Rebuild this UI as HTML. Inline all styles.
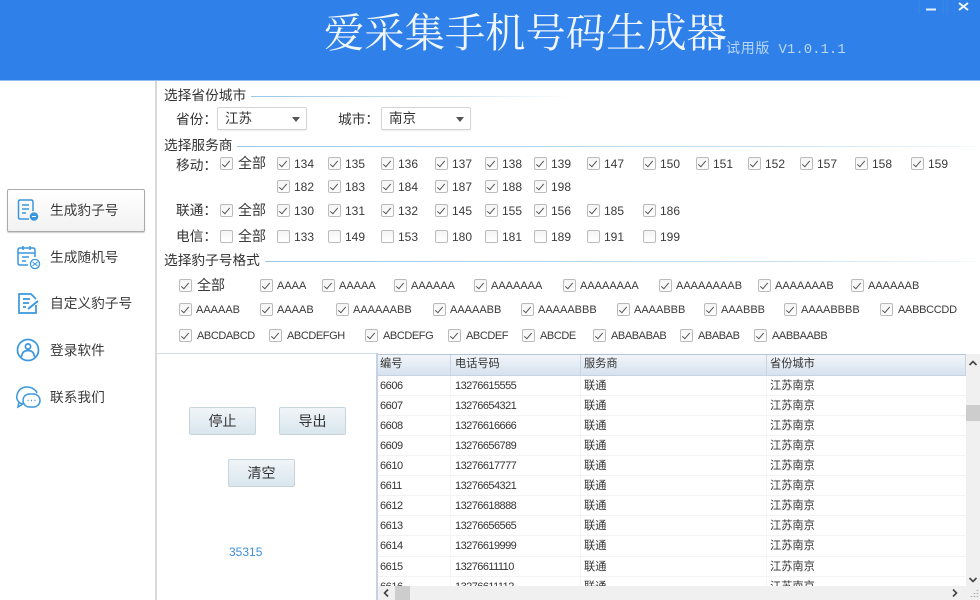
<!DOCTYPE html>
<html lang="zh"><head><meta charset="utf-8"><title>爱采集手机号码生成器</title>
<style>
html,body{margin:0;padding:0;background:#fff}
#a{position:relative;width:980px;height:600px;overflow:hidden;background:#fff;font-family:"Liberation Sans","Noto Sans CJK SC",sans-serif;color:#333;filter:blur(.35px)}
#a>*{position:absolute}
.hd{left:0;top:0;width:980px;height:80px;background:#2f80e8;border-bottom:1px solid #8fbdf0}
.ti{left:324px;top:9px;font:40.3px/50px "Liberation Serif","Noto Serif CJK SC",serif;color:#f0f6fe;white-space:nowrap}
.ver{left:726px;top:39px;font:14px/18px "Liberation Mono","Noto Sans CJK SC",monospace;color:#b9d6f7;white-space:pre}
.ve{font-family:"Noto Sans CJK SC",sans-serif;letter-spacing:.7px}
.s{font-size:13.7px;line-height:16px;white-space:nowrap;color:#333}
.s b{font-family:"Noto Sans CJK TC",sans-serif;font-weight:400}
.l{height:1px}
.k{height:14px;line-height:14px;padding-left:17px;font-size:12px;white-space:nowrap;color:#3a3a3a}
.k:before{content:"";position:absolute;left:0;top:0;width:11px;height:11px;border:1px solid #bbb;border-radius:2px;background:linear-gradient(#f4f4f4,#fff)}
.k:after{content:"";position:absolute;left:4px;top:2px;width:3px;height:7px;border:solid #555;border-width:0 1.4px 1.4px 0;transform:rotate(40deg)}
.u:after{display:none}
.f{font-size:11px}
.g{font-size:11px;letter-spacing:-.42px;padding-left:18px}
.z{font-size:14px;padding-left:18px;line-height:12px}
.cb{width:88px;height:21px;border:1px solid #d4d4d4;border-radius:2px;background:#fff;box-shadow:0 1px 1px #eee;font-size:13.5px;line-height:21px;text-indent:7px}
.cb:after{content:"";position:absolute;right:6px;top:9px;border:4px solid transparent;border-top:5px solid #555;border-bottom:0}
.nav{font-size:13.7px;line-height:18px;left:50px;color:#3a3a3a;white-space:nowrap}
.b{width:65px;height:26px;border:1px solid #c8d5dd;border-radius:2px;background:linear-gradient(#f0f5f8,#d9e6ee);font-size:14px;line-height:26px;text-align:center;color:#333}
.tb{left:378px;top:354px;width:588px;height:232px;overflow:hidden}
.r{display:flex;height:20.12px;line-height:20.5px;border-bottom:1px solid #f3f3f3;box-sizing:border-box;font-size:11.2px}
.r span:nth-child(1){width:73px;padding-left:2px;box-sizing:border-box;font-size:11px;letter-spacing:-.45px;border-right:1px solid #f5f5f5}
.r span:nth-child(2){width:130px;padding-left:4px;box-sizing:border-box;font-size:11px;letter-spacing:-.55px;border-right:1px solid #f5f5f5}
.r span:nth-child(3){width:186px;padding-left:3px;box-sizing:border-box;border-right:1px solid #f5f5f5}
.r span:nth-child(4){width:199px;padding-left:3px;box-sizing:border-box}
.h{background:linear-gradient(#f2f5fa,#d6e2ee);border-top:1px solid #b4c6d6;border-bottom:1px solid #c4d4e2;height:21.6px;line-height:19.5px}
.h span{font-size:11.2px!important;letter-spacing:0!important;border-right:1px solid #c8d6e4!important}
</style></head><body><div id="a">
<div class="hd"></div>
<div class="ti">爱采集手机号码生成器</div>
<div class="ver"><span class="ve">试用版</span> V1.0.1.1</div>
<svg style="left:915px;top:0" width="65" height="20"><path d="M4 0V14M28 0V14M32 0V14" stroke="#3f89ea" fill="none"/><path d="M11 9.500H21" stroke="#e8f2fd" stroke-width="2"/><path d="M44 3L53 10M53 3L44 10" stroke="#eef5fe" stroke-width="2" fill="none"/></svg>

<div style="left:155px;top:81px;width:2px;height:519px;background:#d8d8d8"></div>

<div style="left:7px;top:189px;width:136px;height:41px;border:1px solid #aaa;border-radius:2px;background:linear-gradient(#fff,#f2f2f2);box-shadow:0 1px 1px #ccc"></div>
<svg style="left:15px;top:198px" width="26" height="25" fill="none" stroke="#3a97dd" stroke-width="1.500"><path d="M14 21H5Q3.500 21 3.500 19.500V3.500Q3.500 2 5 2H16Q18 2 18 4V13"/><path d="M7 7H14M7 11H14M7 15H11"/><circle cx="19" cy="18.500" r="4.300" fill="#3a97dd" stroke="none"/><path d="M17 18.500H21" stroke="#fff" stroke-width="1"/></svg>
<svg style="left:15px;top:244px" width="26" height="26" fill="none" stroke="#3a97dd" stroke-width="1.500"><path d="M13 21H5Q3 21 3 19V6Q3 4 5 4H18Q20 4 20 6V13"/><path d="M8 2V6M15 2V6"/><path d="M3 9H20M7 13H14M7 17H11"/><circle cx="20" cy="20" r="4.600" stroke-width="1.300"/><path d="M17.500 18L22.500 22M17.500 22L22.500 18" stroke-width="1"/></svg>
<svg style="left:15px;top:291px" width="26" height="26" fill="none" stroke="#3a97dd" stroke-width="1.700"><path d="M21 14V22H4V3H16L21 8"/><path d="M8 8H15M8 12H14M8 16H11"/><path d="M13 18L23 10" stroke-width="2"/></svg>
<svg style="left:15px;top:337px" width="26" height="26" fill="none" stroke="#3a97dd" stroke-width="1.700"><circle cx="13" cy="13" r="10.500"/><circle cx="13" cy="9.500" r="2.600"/><path d="M6.500 20C7 15 10 13.500 13 13.500S19 15 19.500 20"/></svg>
<svg style="left:14px;top:384px" width="28" height="26" fill="none" stroke="#3a97dd" stroke-width="1.500"><path d="M9 20C4 19 2 15 3 11C4 6 8 3 13 3C18 3 22 6 23 9"/><path d="M5 18L4 23L9 20"/><rect x="9" y="10" width="17" height="13" rx="6.500"/><path d="M13.500 16.500H14.500M17 16.500H18M20.500 16.500H21.500" stroke-width="1.500"/></svg>
<div class="nav" style="top:202px">生成豹子号</div>
<div class="nav" style="top:249px">生成随机号</div>
<div class="nav" style="top:295px">自定义豹子号</div>
<div class="nav" style="top:342px">登录软件</div>
<div class="nav" style="top:389px">联系我们</div>

<div class="s" style="left:164px;top:88px">选择省份城市</div>
<div class="l" style="left:251px;top:96px;width:320px;background:linear-gradient(90deg,#9cc8e8,#d8e8f4 70%,#fff)"></div>
<div class="s" style="left:176px;top:110px">省份<b>：</b></div>
<div class="cb" style="left:217px;top:107px">江苏</div>
<div class="s" style="left:338px;top:110px">城市<b>：</b></div>
<div class="cb" style="left:381px;top:107px">南京</div>

<div class="s" style="left:164px;top:138px">选择服务商</div>
<div class="l" style="left:237px;top:146px;width:740px;background:linear-gradient(90deg,#9cc8e8,#c8e0f2 70%,#f4f9fc)"></div>
<div class="s" style="left:176px;top:156px">移动<b>：</b></div>
<div class="s" style="left:176px;top:201px">联通<b>：</b></div>
<div class="s" style="left:176px;top:227px">电信<b>：</b></div>

<div class="k z" style="left:220px;top:157px">全部</div>
<div class="k" style="left:277px;top:157px">134</div><div class="k" style="left:328px;top:157px">135</div><div class="k" style="left:381px;top:157px">136</div><div class="k" style="left:435px;top:157px">137</div><div class="k" style="left:485px;top:157px">138</div><div class="k" style="left:534px;top:157px">139</div><div class="k" style="left:587px;top:157px">147</div><div class="k" style="left:643px;top:157px">150</div><div class="k" style="left:696px;top:157px">151</div><div class="k" style="left:748px;top:157px">152</div><div class="k" style="left:800px;top:157px">157</div><div class="k" style="left:855px;top:157px">158</div><div class="k" style="left:911px;top:157px">159</div>
<div class="k" style="left:277px;top:180px">182</div><div class="k" style="left:328px;top:180px">183</div><div class="k" style="left:381px;top:180px">184</div><div class="k" style="left:435px;top:180px">187</div><div class="k" style="left:485px;top:180px">188</div><div class="k" style="left:534px;top:180px">198</div>
<div class="k z" style="left:220px;top:204px">全部</div>
<div class="k" style="left:277px;top:204px">130</div><div class="k" style="left:328px;top:204px">131</div><div class="k" style="left:381px;top:204px">132</div><div class="k" style="left:435px;top:204px">145</div><div class="k" style="left:485px;top:204px">155</div><div class="k" style="left:534px;top:204px">156</div><div class="k" style="left:587px;top:204px">185</div><div class="k" style="left:643px;top:204px">186</div>
<div class="k z u" style="left:220px;top:230px">全部</div>
<div class="k u" style="left:277px;top:230px">133</div><div class="k u" style="left:328px;top:230px">149</div><div class="k u" style="left:381px;top:230px">153</div><div class="k u" style="left:435px;top:230px">180</div><div class="k u" style="left:485px;top:230px">181</div><div class="k u" style="left:534px;top:230px">189</div><div class="k u" style="left:587px;top:230px">191</div><div class="k u" style="left:643px;top:230px">199</div>

<div class="s" style="left:164px;top:253px">选择豹子号格式</div>
<div class="l" style="left:265px;top:261px;width:712px;background:linear-gradient(90deg,#9cc8e8,#c8e0f2 70%,#f4f9fc)"></div>

<div class="k z" style="left:179px;top:279px">全部</div>
<div class="k f" style="left:260px;top:279px">AAAA</div><div class="k f" style="left:322px;top:279px">AAAAA</div><div class="k f" style="left:394px;top:279px">AAAAAA</div><div class="k f" style="left:474px;top:279px">AAAAAAA</div><div class="k f" style="left:563px;top:279px">AAAAAAAA</div><div class="k f" style="left:659px;top:279px">AAAAAAAAB</div><div class="k f" style="left:758px;top:279px">AAAAAAAB</div><div class="k f" style="left:851px;top:279px">AAAAAAB</div>
<div class="k f" style="left:179px;top:303px">AAAAAB</div><div class="k f" style="left:260px;top:303px">AAAAB</div><div class="k f" style="left:336px;top:303px">AAAAAABB</div><div class="k f" style="left:433px;top:303px">AAAAABB</div><div class="k f" style="left:521px;top:303px">AAAAABBB</div><div class="k f" style="left:617px;top:303px">AAAABBB</div><div class="k f" style="left:704px;top:303px">AAABBB</div><div class="k f" style="left:784px;top:303px">AAAABBBB</div><div class="k g" style="left:880px;top:303px;letter-spacing:-.3px">AABBCCDD</div>
<div class="k g" style="left:179px;top:329px">ABCDABCD</div><div class="k g" style="left:269px;top:329px">ABCDEFGH</div><div class="k g" style="left:365px;top:329px">ABCDEFG</div><div class="k g" style="left:448px;top:329px">ABCDEF</div><div class="k g" style="left:522px;top:329px">ABCDE</div><div class="k g" style="left:593px;top:329px">ABABABAB</div><div class="k g" style="left:680px;top:329px">ABABAB</div><div class="k g" style="left:754px;top:329px">AABBAABB</div>

<div style="left:156px;top:353px;width:222px;height:1px;background:#cfdbe6"></div>
<div style="left:376px;top:353px;width:2px;height:247px;background:#c6d2e4"></div>
<div class="b" style="left:189px;top:407px">停止</div>
<div class="b" style="left:279px;top:407px">导出</div>
<div class="b" style="left:228px;top:459px">清空</div>
<div style="left:229px;top:545px;font-size:12px;line-height:14px;color:#3f8fd8">35315</div>

<div class="tb">
<div class="r h"><span>编号</span><span>电话号码</span><span>服务商</span><span>省份城市</span></div>
<div class="r"><span>6606</span><span>13276615555</span><span>联通</span><span>江苏南京</span></div>
<div class="r"><span>6607</span><span>13276654321</span><span>联通</span><span>江苏南京</span></div>
<div class="r"><span>6608</span><span>13276616666</span><span>联通</span><span>江苏南京</span></div>
<div class="r"><span>6609</span><span>13276656789</span><span>联通</span><span>江苏南京</span></div>
<div class="r"><span>6610</span><span>13276617777</span><span>联通</span><span>江苏南京</span></div>
<div class="r"><span>6611</span><span>13276654321</span><span>联通</span><span>江苏南京</span></div>
<div class="r"><span>6612</span><span>13276618888</span><span>联通</span><span>江苏南京</span></div>
<div class="r"><span>6613</span><span>13276656565</span><span>联通</span><span>江苏南京</span></div>
<div class="r"><span>6614</span><span>13276619999</span><span>联通</span><span>江苏南京</span></div>
<div class="r"><span>6615</span><span>13276611110</span><span>联通</span><span>江苏南京</span></div>
<div class="r"><span>6616</span><span>13276611112</span><span>联通</span><span>江苏南京</span></div>
</div>

<div style="left:966px;top:354px;width:14px;height:232px;background:#f0f0f0"></div>
<div style="left:966px;top:405px;width:14px;height:16px;background:#cdcdcd"></div>
<div style="left:378px;top:586px;width:602px;height:14px;background:#f0f0f0"></div>
<div style="left:395px;top:586px;width:15px;height:14px;background:#cdcdcd"></div>
<svg style="left:966px;top:354px" width="14" height="232" fill="none" stroke="#444" stroke-width="1.600"><path d="M3.500 11L7 7.500L10.500 11"/><path d="M3.500 224L7 227.500L10.500 224"/></svg>
<svg style="left:378px;top:586px" width="602" height="14" fill="none" stroke="#444" stroke-width="1.600"><path d="M10 3.500L6.500 7L10 10.500"/><path d="M575 3.500L578.500 7L575 10.500"/><path d="M599.500 4V5M596.500 7V8M599.500 7V8M593.500 10V11M596.500 10V11M599.500 10V11" stroke="#aaa"/></svg>
</div></body></html>
